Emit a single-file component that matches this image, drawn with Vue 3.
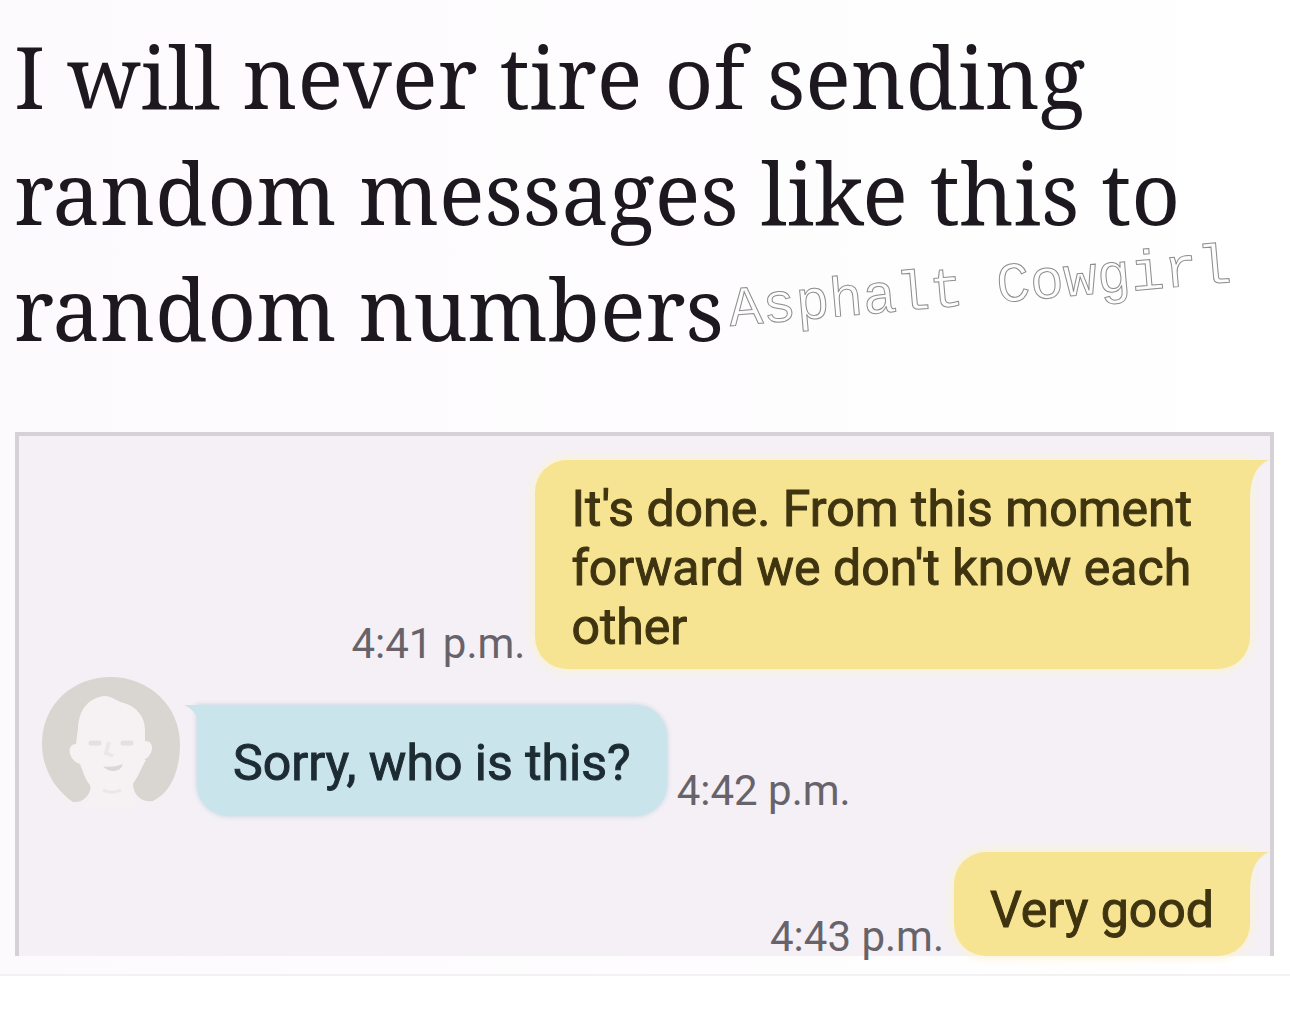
<script setup>
const headline = ['I will never tire of sending', 'random messages like this to', 'random numbers']

const messages = [
  { id: 1, side: 'sent', lines: ["It's done. From this moment", "forward we don't know each", 'other'], time: '4:41 p.m.' },
  { id: 2, side: 'received', lines: ['Sorry, who is this?'], time: '4:42 p.m.' },
  { id: 3, side: 'sent', lines: ['Very good'], time: '4:43 p.m.' },
]
</script>

<template>
  <main class="post">
    <header class="intro">
      <h1 class="headline">
        <span v-for="line in headline" :key="line" class="headline-line">{{ line }}</span>
      </h1>
      <span class="signature">Asphalt Cowgirl</span>
    </header>

    <ol class="chat">
      <li v-for="m in messages" :key="m.id" class="message" :class="m.side">
        <svg v-if="m.side === 'received'" class="avatar" viewBox="0 0 140 132" aria-hidden="true">
          <path d="M32 126C14 114 1 92 1 68C1 28 32 1 70 1C108 1 139 30 139 68C139 92 131 116 112 125C101 127 92 119 92 108L105 84L48 84L50 112C48 120 42 127 32 126Z" fill="#d9d6d1" />
          <path d="M37 52C38 33 48 22 63 20C71 20 75 25 83 27C96 31 104 41 104 54L104 65C114 65 113 78 103 84C100 94 97 101 92 107C90 116 94 124 96 132H42C48 126 51 118 49 109C45 105 42 96 39 88C27 84 25 68 35 68Z" fill="#f6f2f3" />
          <path d="M50 67L58 67M82 67L90 67" fill="none" stroke="#e4e0e0" stroke-width="5" stroke-linecap="round" />
          <path d="M68 66L65 77L72 80" fill="none" stroke="#ebe7e6" stroke-width="4" />
          <path d="M62 90C69 92 76 90 82 88C80 96 68 98 62 90Z" fill="#dcd7d7" />
          <path d="M62 114C68 117 74 117 80 114" fill="none" stroke="#ebe7e6" stroke-width="3" />
        </svg>
        <p class="bubble" :class="{ single: m.lines.length === 1 }">
          <svg class="tail" viewBox="0 0 40 40" aria-hidden="true">
            <path d="M0 0H39C26 6 20 18 20 40H0Z" />
          </svg>
          <span v-for="line in m.lines" :key="line" class="bubble-line">{{ line }}</span>
        </p>
        <time class="time">{{ m.time }}</time>
      </li>
    </ol>
    <hr class="rule" />
  </main>
</template>

<style>
body {
  margin: 0;
  background: #fff;
}
</style>

<style scoped>
.post {
  padding-top: 18px;
  background: linear-gradient(90deg, #fdfafd, #fff);
}

.intro {
  position: relative;
  padding: 0 14px;
}

.headline {
  margin: 0;
  font: 400 85px/116px "Noto Serif", "Droid Serif", "DejaVu Serif Condensed", "DejaVu Serif", serif;
  color: #1d1820;
}

.headline-line {
  display: block;
  white-space: nowrap;
}

.signature {
  position: absolute;
  left: 728px;
  bottom: 45px;
  font: 400 56px/64px "Liberation Mono", monospace;
  color: #fdfdfd;
  -webkit-text-stroke: 1px #8e8c8e;
  transform: rotate(-5deg);
  white-space: nowrap;
}

.chat {
  display: flex;
  flex-direction: column;
  margin: 66px 16px 0 15px;
  padding: 24px 20px 0 22px;
  border: 4px solid #d5d1d7;
  border-bottom: 0;
  list-style: none;
  background: #f4f0f5;
}

.message {
  display: flex;
  align-items: flex-end;
  gap: 10px;
  margin-bottom: 36px;
}

.message:last-child {
  margin-bottom: 0;
}

.sent {
  flex-direction: row-reverse;
}

.avatar {
  flex: none;
  width: 140px;
  height: 132px;
  margin: -30px 6px 8px 0;
}

.bubble {
  position: relative;
  margin: 0;
  padding: 20px 58px 12px 36px;
  border-radius: 32px;
  font: 400 50px/59px Roboto, sans-serif;
}

.bubble.single {
  padding: 29px 36px 23px;
}

.message:last-child .bubble {
  padding-bottom: 16px;
}

.bubble-line {
  display: block;
  white-space: nowrap;
}

.sent .bubble {
  border-top-right-radius: 0;
  background: #f7e493;
  box-shadow: 0 0 10px 2px #fbf3d3;
  color: #3f3410;
  -webkit-text-stroke: 1px #3f3410;
}

.received .bubble {
  border-top-left-radius: 0;
  background: #cae4ec;
  box-shadow: 0 0 4px 1px #cdd9e8;
  color: #1d2c33;
  -webkit-text-stroke: 1px #1d2c33;
}

.tail {
  position: absolute;
  top: 0;
  width: 40px;
  height: 40px;
}

.sent .tail {
  right: -20px;
  fill: #f7e493;
}

.received .tail {
  left: -14px;
  fill: #cae4ec;
  transform: scaleX(-1);
}

.time {
  font: 400 42px/50px Roboto, sans-serif;
  color: #68636a;
  white-space: nowrap;
}

.message:last-child .time {
  margin-bottom: -6px;
}

.rule {
  margin: 18px 0 0;
  border: 0;
  border-top: 2px solid #f3f1f3;
}
</style>
